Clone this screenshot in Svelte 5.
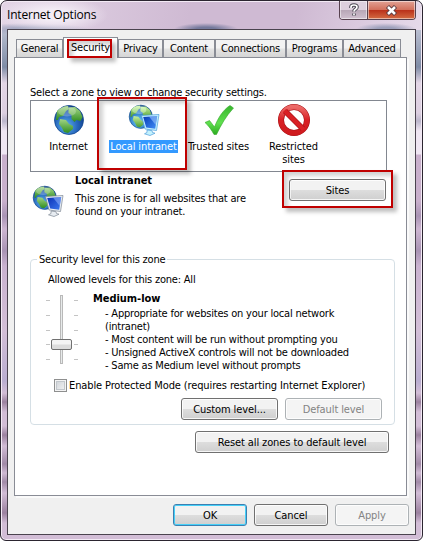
<script lang="ts">
  const tabs = [
    { label: "General", width: 47 },
    { label: "Security", width: 55 },
    { label: "Privacy", width: 45 },
    { label: "Content", width: 52 },
    { label: "Connections", width: 71 },
    { label: "Programs", width: 57 },
    { label: "Advanced", width: 58 },
  ];

  const zones = [
    { label: "Internet", icon: "globe" },
    { label: "Local intranet", icon: "intranet" },
    { label: "Trusted sites", icon: "check" },
    { label: "Restricted sites", icon: "blocked" },
  ];

  const details = [
    "- Appropriate for websites on your local network (intranet)",
    "- Most content will be run without prompting you",
    "- Unsigned ActiveX controls will not be downloaded",
    "- Same as Medium level without prompts",
  ];

  let activeTab = $state("Security");
  let activeZone = $state("Local intranet");
  let protectedMode = $state(false);
</script>

{#snippet globe()}
  <circle cx="16" cy="16" r="14.5" fill="url(#sea)" stroke="#12468f" stroke-width=".8" />
  <path d="M4 7C7 4 11 2 15 2l1 3-3 2-3 5-4 1-1 3-2 0z" fill="url(#land)" />
  <path d="M16 3.500l6-.500 5 4 2.500 6-2 4-4-1-2 2-3-3 0-4-3-2 0-3z" fill="url(#land)" />
  <path d="M7 15l6 1 3 4 4 2 0 3-5 4-4-1-2-4-3-4z" fill="url(#land)" />
  <ellipse cx="14" cy="7.500" rx="9" ry="5" fill="#fff" opacity=".25" />
{/snippet}

{#snippet icon(name: string)}
  <svg class="icon" viewBox="0 0 32 32" aria-hidden="true">
    {#if name === "globe"}
      {@render globe()}
    {:else if name === "intranet"}
      <g transform="scale(.8)">{@render globe()}</g>
      <g class="monitor">
        <path class="frame" d="M13.500 11.500l17.500-1-2.500 16-11.500-1.500z" />
        <path d="M15.200 13l14-.900-2 12.600-9-1.200z" fill="url(#screen)" />
        <path d="M21 12.600l8.200-.500-1.500 9z" fill="#9dbdff" opacity=".5" />
        <path class="frame" d="M19 26l5 .700.500 1.800 2.500.700-5 2.300-5.500-1.700 2.500-1.300z" />
      </g>
    {:else if name === "check"}
      <path d="M2 18.500l4.500-2 5 6.500C15 14 20 6 27 1.500l3.500 2.500C23 12 18 21 13.500 30.500h-2.500C8.500 26 6 22 2 18.500z" fill="url(#tick)" stroke="#35a82c" stroke-width=".6" />
    {:else}
      <circle cx="16" cy="16" r="13" fill="#fff" stroke="#a91217" stroke-width="6" />
      <circle cx="16" cy="16" r="13" fill="none" stroke="url(#stop)" stroke-width="4.800" />
      <path d="M7 7l18 18" stroke="#a91217" stroke-width="5.600" />
      <path d="M6.500 6.500l19 19" stroke="#d92025" stroke-width="4.400" />
    {/if}
  </svg>
{/snippet}

<svg class="defs" aria-hidden="true">
  <defs>
    <radialGradient id="sea" cx=".4" cy=".7" r=".7">
      <stop offset="0" stop-color="#5fb4ef" />
      <stop offset=".55" stop-color="#2768bd" />
      <stop offset="1" stop-color="#0d3b86" />
    </radialGradient>
    <linearGradient id="land" x2="0" y2="1">
      <stop offset="0" stop-color="#a3d586" />
      <stop offset="1" stop-color="#2f8d20" />
    </linearGradient>
    <linearGradient id="screen" x2="1" y2="1">
      <stop offset="0" stop-color="#0a2fb5" />
      <stop offset="1" stop-color="#3d7af0" />
    </linearGradient>
    <linearGradient id="tick" x2="0" y2="1">
      <stop offset="0" stop-color="#38b52e" />
      <stop offset=".6" stop-color="#5fe04e" />
      <stop offset="1" stop-color="#2cab20" />
    </linearGradient>
    <linearGradient id="stop" x2="0" y2="1">
      <stop offset="0" stop-color="#ec6a68" />
      <stop offset=".5" stop-color="#d92025" />
      <stop offset="1" stop-color="#cf1a1e" />
    </linearGradient>
  </defs>
</svg>

<div class="window">
  <header class="titlebar">
    <h1>Internet Options</h1>
    <div class="caption">
      <button class="help" aria-label="Help">
        <svg width="12" height="14" viewBox="0 0 12 14">
          <path d="M3 5V4q0-2 3-2t3 2q0 1.500-1.500 2.200Q6 7 6 8.500M6 10.500v2" fill="none" stroke="#4c4954" stroke-width="3.600" />
          <path d="M3 5V4q0-2 3-2t3 2q0 1.500-1.500 2.200Q6 7 6 8.500M6 10.500v1.800" fill="none" stroke="#fff" stroke-width="1.700" />
        </svg>
      </button>
      <button class="close" aria-label="Close">
        <svg width="13" height="11" viewBox="0 0 13 11">
          <path d="M2.500 1.500l8 8M10.500 1.500l-8 8" stroke="#5b3b40" stroke-width="4.400" />
          <path d="M3 2l7 7M10 2L3 9" stroke="#fff" stroke-width="2.500" />
        </svg>
      </button>
    </div>
  </header>

  <main class="client">
    <nav class="tabs">
      {#each tabs as tab}
        <button
          class="tab"
          class:active={tab.label === activeTab}
          style:width="{tab.width}px"
          onclick={() => (activeTab = tab.label)}
        >
          <span>{tab.label}</span>
          {#if tab.label === "Security"}<i class="mark mark-tab"></i>{/if}
        </button>
      {/each}
    </nav>

    <section class="page">
      <p class="prompt">Select a zone to view or change security settings.</p>
      <div class="zones">
        {#each zones as zone}
          <button class="zone" class:selected={zone.label === activeZone} onclick={() => (activeZone = zone.label)}>
            {@render icon(zone.icon)}
            <span>{zone.label}</span>
            {#if zone.icon === "intranet"}<i class="mark mark-zone"></i>{/if}
          </button>
        {/each}
      </div>

      <div class="about">
        {@render icon("intranet")}
        <div class="about-text">
          <h2>Local intranet</h2>
          <p>This zone is for all websites that are<br />found on your intranet.</p>
        </div>
        <button class="btn sites">Sites<i class="mark mark-sites"></i></button>
      </div>

      <fieldset class="level">
        <legend>Security level for this zone</legend>
        <p class="allowed">Allowed levels for this zone: All</p>
        <div class="level-body">
          <svg class="slider" width="32" height="70" viewBox="0 0 32 70" aria-hidden="true">
            <path d="M0 5.500h4M28 5.500h4M0 20.500h4M28 20.500h4M0 35.500h4M28 35.500h4M0 49.500h4M28 49.500h4M0 64.500h4M28 64.500h4" stroke="#c4c4c4" />
            <rect x="14.500" y=".5" width="2" height="68" fill="#e7eaea" stroke="#b9b9b9" />
            <rect x="5.500" y="44.500" width="20" height="10" rx="1.500" fill="url(#thumb)" stroke="#707070" />
            <linearGradient id="thumb" x2="0" y2="1">
              <stop offset=".45" stop-color="#f4f4f4" />
              <stop offset=".55" stop-color="#dcdcdc" />
            </linearGradient>
          </svg>
          <div>
            <h2>Medium-low</h2>
            <ul>
              {#each details as line}
                <li>{line}</li>
              {/each}
            </ul>
          </div>
        </div>
        <label class="protect">
          <input type="checkbox" bind:checked={protectedMode} />
          <span>Enable Protected Mode (requires restarting Internet Explorer)</span>
        </label>
        <div class="level-actions">
          <button class="btn">Custom level...</button>
          <button class="btn" disabled>Default level</button>
        </div>
      </fieldset>

      <button class="btn reset">Reset all zones to default level</button>
    </section>

    <footer class="actions">
      <button class="btn default">OK</button>
      <button class="btn">Cancel</button>
      <button class="btn" disabled>Apply</button>
    </footer>
  </main>
</div>

<style>
  :global(body) { margin: 0; background: #fff; }
  :global(*) { box-sizing: border-box; }
  .window {
    width: 423px; height: 541px; padding: 0 6px 5px;
    display: flex; flex-direction: column;
    border: 1px solid #2b2530; border-radius: 7px 7px 6px 6px;
    box-shadow: inset 0 0 0 1px #f3eaf5;
    background:
      radial-gradient(ellipse 55px 18px at 52px 14px, #f3ecf5 30%, transparent),
      radial-gradient(ellipse 32px 6px at 205px 28px, #74799c 30%, transparent),
      radial-gradient(ellipse 30px 6px at 385px 28px, #9da0bb 30%, transparent),
      radial-gradient(ellipse 60px 6px at 28px 28px, #a9abc4 30%, transparent),
      linear-gradient(100deg, #e3d5e6, #cfbad3 45%, #cfbad3 70%, #e6daea) 0 0 / 100% 29px no-repeat,
      linear-gradient(
        #b9bed0 29px, #7f8ca6 66px, #e3d6e6 82px, #dccfe0 112px, #bbb6cb 120px, #efe6f2 130px, #efe6f2 153px,
        #c9b0cc 154px, #c9b0cc 200px, #a994b4 215px, #cdb6d1 228px, #a994b4 250px, #c9b2cf 265px, #d3bfd7 330px,
        #b9add0 380px, #d2bdd6 392px, #9b819f 401px, #d2bdd6 411px, #d2bdd6 425px, #9b819f 434px, #d2bdd6 445px,
        #a18aa7 463px, #cfbad3 472px, #a18aa7 481px, #d2bdd6 492px, #9b819f 512px, #d2bdd6 522px, #d2bdd6
      );
    font: 11px/13px "DejaVu Sans Condensed", "DejaVu Sans", sans-serif;
    font-stretch: condensed;
    letter-spacing: -0.2px;
    color: #000;
  }
  .defs { position: absolute; width: 0; height: 0; }
  button { font: inherit; letter-spacing: inherit; color: inherit; padding: 0; margin: 0; border: 0; background: none; white-space: nowrap; }
  h1, h2, p, ul { margin: 0; padding: 0; }
  h2 { font-size: 11px; line-height: 13px; letter-spacing: -0.05px; }
  .titlebar { height: 28px; display: flex; justify-content: space-between; flex: none; }
  h1 { font: 12px/28px "Open Sans", "Noto Sans", sans-serif; letter-spacing: -0.2px; }
  .caption { display: flex; height: 19px; border: 1px solid #57414f; border-top: 0; border-radius: 0 0 4px 4px; overflow: hidden; }
  .caption button { display: flex; align-items: center; justify-content: center; box-shadow: inset 0 0 0 1px rgba(255,255,255,.5); }
  .caption .help { width: 28px; border-right: 1px solid #57414f; background: linear-gradient(#ddd0dd 48%, #b7a6b6 50%, #d0c0cf); }
  .caption .close { width: 47px; background: linear-gradient(#e2a295, #d2705c 48%, #b92f19 50%, #d46c43); }

  .client { flex: 1; border: 1px solid #4a434e; background: #f0f0f0; padding: 7px 8px 8px 6px; display: flex; flex-direction: column; }
  .tabs { display: flex; align-items: flex-end; height: 20px; padding-left: 2px; flex: none; }
  .tab {
    position: relative; height: 18px; flex: none;
    border: 1px solid #898c95; border-bottom: 0;
    background: linear-gradient(#f3f3f3 45%, #e3e3e3 55%, #d5d5d5);
  }
  .tab.active { height: 21px; margin-bottom: -1px; padding-bottom: 1px; background: #fff; z-index: 1; }
  .page { flex: none; width: 393px; height: 439px; border: 1px solid #898c95; background: #fff; padding: 28px 11px 0 15px; display: flex; flex-direction: column; box-shadow: 2px 2px 0 #fafafa; }
  .prompt { margin-bottom: 1px; }
  .zones { width: 357px; height: 72px; border: 1px solid #828790; display: flex; flex: none; }
  .zone { position: relative; width: 75px; display: flex; flex-direction: column; align-items: center; padding-top: 3px; letter-spacing: -0.1px; }
  .icon { width: 32px; height: 32px; flex: none; }
  .frame { fill: #e8edf2; stroke: #7c8794; stroke-width: .7; }
  .zone span { margin-top: 4px; padding: 0 1px; line-height: 13px; max-width: 72px; white-space: normal; }
  .zone.selected span { background: #3399ff; color: #fff; white-space: nowrap; }
  .zone.selected .icon { filter: hue-rotate(-6deg) brightness(1.15) saturate(.85); }
  .zone.selected .frame { fill: #a9d2f2; stroke: #3f86cc; }
  .about { display: flex; height: 81px; flex: none; }
  .about .icon { margin: 13px 11px 0 2px; }
  .about-text { flex: 1; padding-top: 2px; white-space: nowrap; }
  .about-text p { margin-top: 5px; }
  .btn {
    width: 97px; height: 22px; border: 1px solid #707070; border-radius: 3px;
    background: linear-gradient(#f2f2f2 0 48%, #dddddd 52%, #cfcfcf);
    box-shadow: inset 0 0 0 1px rgba(255,255,255,.8);
    letter-spacing: -0.1px;
  }
  .btn:disabled { border-color: #adb2b5; background: #f4f4f4; color: #838383; }
  .sites { position: relative; margin: 7px 9px 0 0; }
  .level { margin: 0; padding: 0; width: 365px; height: 172px; border: 1px solid #d5dfe5; border-radius: 4px; flex: none; }
  legend { margin-left: 6px; padding: 0 2px; }
  .allowed { margin: 7px 0 0 17px; }
  .level-body { display: flex; height: 85px; margin-top: 6px; }
  .slider { margin: 3px 15px 0 15px; flex: none; }
  ul { list-style: none; width: 265px; margin: 2px 0 0 12px; }
  .protect { display: flex; align-items: center; margin: 2px 0 0 23px; gap: 2px; white-space: nowrap; letter-spacing: -0.12px; }
  input { appearance: none; width: 13px; height: 13px; margin: 0; border: 1px solid #8e8f8f; background: linear-gradient(135deg, #cbd0d5, #f6f6f6); box-shadow: inset 0 0 0 1px #f4f4f4, inset 0 0 0 2px #c2c7cc; }
  .level-actions { display: flex; gap: 7px; margin: 6px 0 0 150px; }
  .reset { width: 194px; margin: 6px 0 0 165px; flex: none; }
  .actions { display: flex; justify-content: flex-end; gap: 7px; margin-top: 8px; margin-right: -2px; }
  .actions .btn { width: 74px; }
  .btn.default { border-color: #3c7fb1; box-shadow: inset 0 0 0 1px #46d0f8; }

  .mark { position: absolute; border: 2px solid #c00000; box-shadow: 4px 4px 4px rgba(0,0,0,.25), inset 4px 4px 4px rgba(0,0,0,.18); pointer-events: none; z-index: 2; }
  .mark-tab { left: 3px; top: 1px; width: 45px; height: 19px; }
  .mark-zone { left: -9px; top: -4px; width: 90px; height: 73px; }
  .mark-sites { left: -8px; top: -10px; width: 111px; height: 38px; }
</style>
